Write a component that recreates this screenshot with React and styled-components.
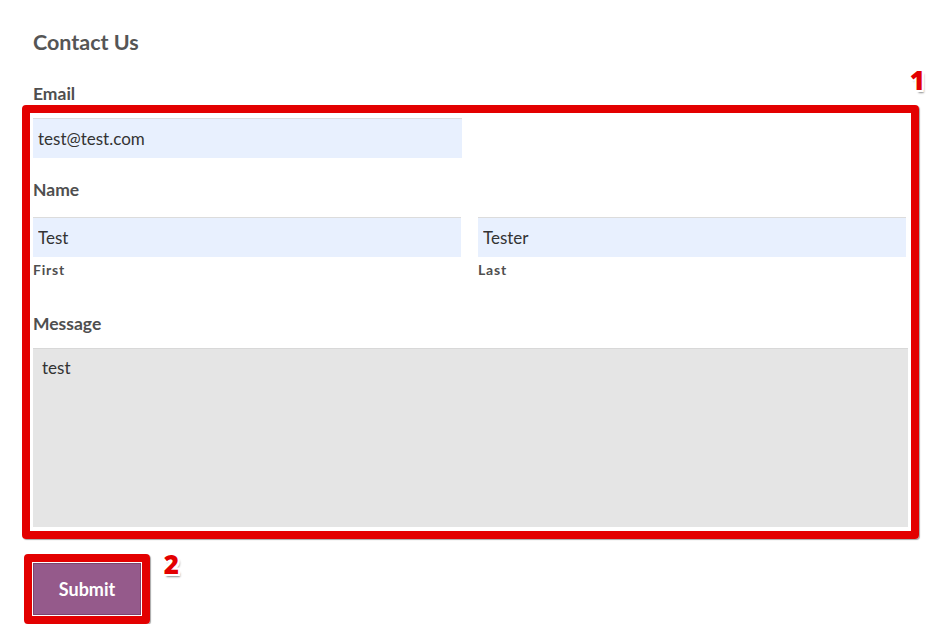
import React from "react";
import styled, { createGlobalStyle } from "styled-components";

const GlobalStyle = createGlobalStyle`
  body {
    margin: 0;
    background: #fff;
    font-family: Lato, "Open Sans", sans-serif;
  }
`;

const Page = styled.form`
  width: 875px;
  padding: 30px 0 0 33px;
  display: flex;
  flex-direction: column;
`;

const Title = styled.h2`
  margin: 0;
  font-size: 21.5px;
  line-height: 24px;
  font-weight: 700;
  color: #555;
`;

const Label = styled.label`
  display: block;
  margin-top: ${(p) => p.$top}px;
  font-size: 17.5px;
  line-height: 20px;
  font-weight: 700;
  color: #4f4f4f;
`;

const SubLabel = styled.span`
  display: block;
  margin-top: 5px;
  font-size: 14px;
  line-height: 16px;
  font-weight: 700;
  letter-spacing: 0.8px;
  color: #4f4f4f;
`;

const Highlight = styled.div`
  position: relative;
  margin: ${(p) => p.$top}px ${(p) => (p.$fit ? 0 : -p.$left)}px 0
    ${(p) => -p.$left}px;
  padding: ${(p) => p.$pad};
  border: 8px solid #e30000;
  border-radius: 4px;
  box-shadow: 1px 1px 1px rgba(0, 0, 0, 0.35);
  align-self: ${(p) => (p.$fit ? "flex-start" : "stretch")};
`;

const Badge = styled.span`
  position: absolute;
  top: ${(p) => p.$top}px;
  right: ${(p) => p.$right}px;
  font-family: "Open Sans", Lato, sans-serif;
  font-size: 26px;
  line-height: 26px;
  font-weight: 800;
  color: #e30000;
  text-shadow: -2px 0 #fff, 2px 0 #fff, 0 -2px #fff, 0 2px #fff,
    -2px -2px #fff, 2px 2px #fff, -2px 2px #fff, 2px -2px #fff,
    2px 3px 2px rgba(0, 0, 0, 0.45);
`;

const Input = styled.input`
  box-sizing: border-box;
  width: ${(p) => p.$width || "100%"};
  height: 40px;
  padding: 0 5px;
  border: none;
  border-top: 1px solid #dcdcdc;
  background: #e8f0fe;
  font-family: Lato, "Open Sans", sans-serif;
  font-size: 17px;
  color: #333;
  outline: none;
`;

const NameRow = styled.div`
  margin-top: 17px;
  margin-right: 2px;
  display: grid;
  grid-template-columns: 1fr 1fr;
  column-gap: 17px;
`;

const Field = styled.div`
  display: flex;
  flex-direction: column;
`;

const TextArea = styled.textarea`
  box-sizing: border-box;
  display: block;
  width: 100%;
  height: 179px;
  margin-top: 14px;
  padding: 8px 9px;
  border: none;
  border-top: 1px solid #d8d8d8;
  background: #e5e5e5;
  font-family: Lato, "Open Sans", sans-serif;
  font-size: 17px;
  color: #333;
  resize: none;
  outline: none;
`;

const Submit = styled.button`
  display: block;
  width: 108px;
  height: 52px;
  border: 1px solid #7a4570;
  background: #955a8b;
  color: #fff;
  font-family: Lato, "Open Sans", sans-serif;
  font-size: 18px;
  font-weight: 700;
  cursor: pointer;
`;

const App = () => {
  return (
    <>
      <GlobalStyle />
      <Page onSubmit={(e) => e.preventDefault()}>
        <Title>Contact Us</Title>
        <Label $top={30}>Email</Label>
        <Highlight $top={1} $left={11} $pad="5px 3px 4px 3px">
          <Badge $top={-46} $right={-14}>1</Badge>
          <Input $width="429px" defaultValue="test@test.com" />
          <Label $top={22}>Name</Label>
          <NameRow>
            <Field>
              <Input defaultValue="Test" />
              <SubLabel>First</SubLabel>
            </Field>
            <Field>
              <Input defaultValue="Tester" />
              <SubLabel>Last</SubLabel>
            </Field>
          </NameRow>
          <Label $top={36}>Message</Label>
          <TextArea defaultValue="test" />
        </Highlight>
        <Highlight $top={15} $left={9} $pad="1px" $fit>
          <Badge $top={-11} $right={-37}>2</Badge>
          <Submit type="submit">Submit</Submit>
        </Highlight>
      </Page>
    </>
  );
};

export default App;
